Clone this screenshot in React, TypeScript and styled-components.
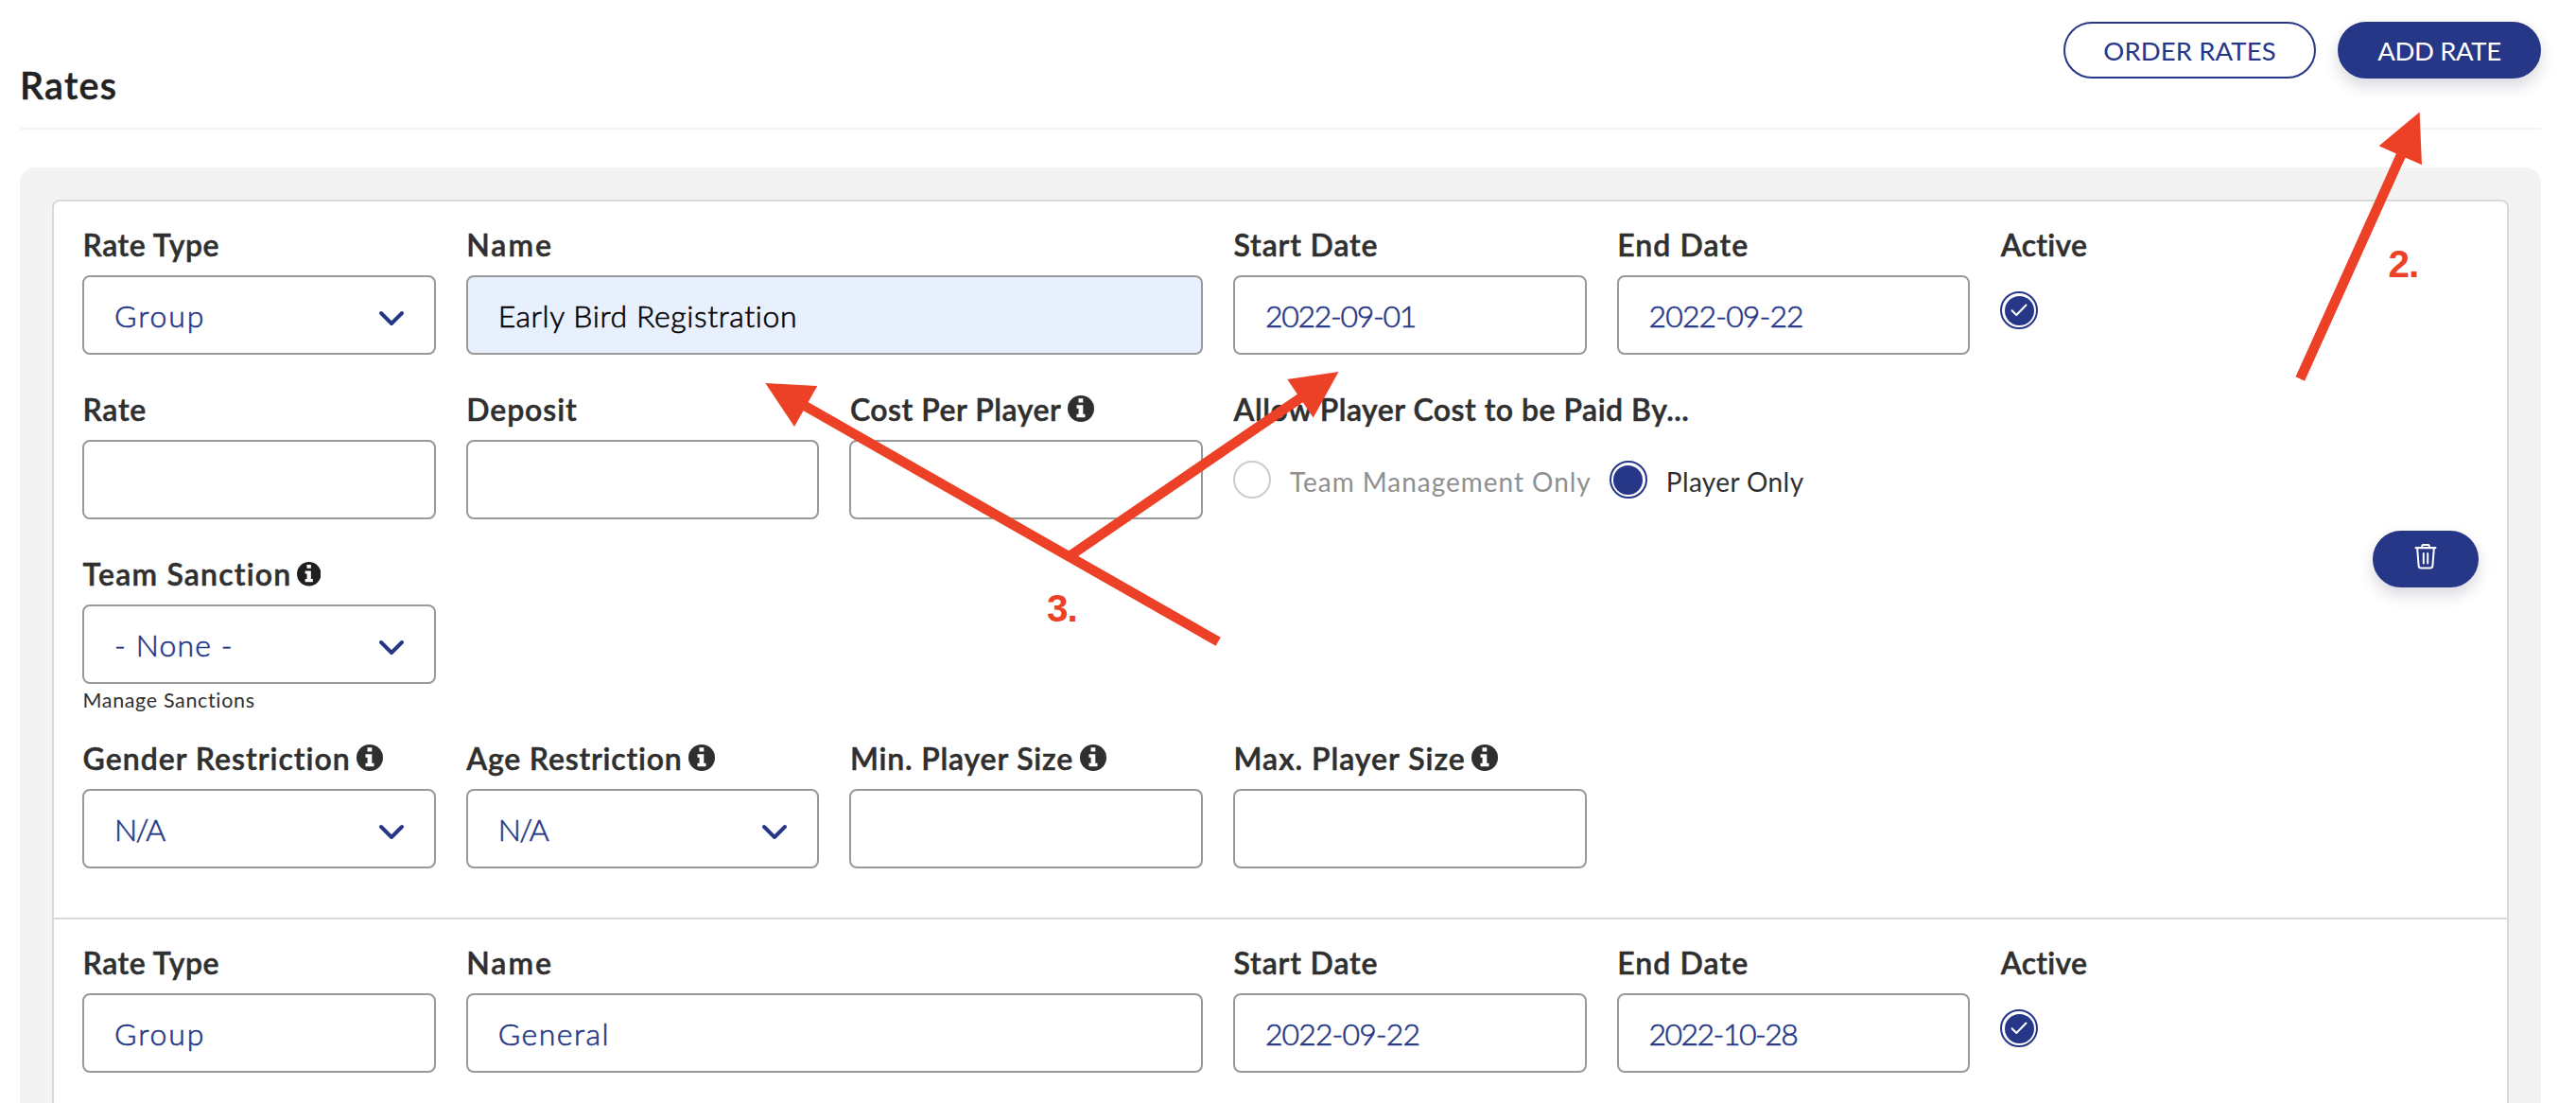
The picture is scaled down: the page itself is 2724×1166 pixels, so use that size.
import React from "react";
import styled, { createGlobalStyle } from "styled-components";

const navy = "#263787";
const ink = "#2f2f2f";
const accent = "#ec4127";

const GlobalStyle = createGlobalStyle`
  *, *::before, *::after { box-sizing: border-box; }
  body {
    margin: 0;
    background: #fff;
    color: ${ink};
    font-family: Lato, "Open Sans", sans-serif;
  }
`;

const Page = styled.main`
  position: relative;
  height: 1166px;
  overflow: hidden;
  padding: 0 37px 0 21px;
`;

const Header = styled.header`
  display: flex;
  justify-content: space-between;
  align-items: flex-end;
  height: 137px;
  border-bottom: 2px solid #f3f3f3;
`;

const Title = styled.h1`
  margin: 0 0 21px;
  font-size: 39.5px;
  line-height: 48px;
  font-weight: 600;
  letter-spacing: 1.3px;
  color: #222;
  -webkit-text-stroke: 0.5px currentColor;
`;

const Actions = styled.div`
  display: flex;
  gap: 23px;
  align-self: flex-start;
  padding-top: 23px;
`;

const Button = styled.button<{ $primary?: boolean; $width: number; $spacing?: number }>`
  display: flex;
  align-items: center;
  justify-content: center;
  width: ${(p) => p.$width}px;
  height: 60px;
  padding: 2px 0 0;
  border: 2px solid ${navy};
  border-radius: 30px;
  background: ${(p) => (p.$primary ? navy : "#fff")};
  color: ${(p) => (p.$primary ? "#fff" : navy)};
  box-shadow: ${(p) => (p.$primary ? "0 8px 16px rgba(30, 30, 70, 0.17)" : "none")};
  font: 400 27.5px/54px Lato, sans-serif;
  letter-spacing: ${(p) => p.$spacing ?? 0}px;
  white-space: nowrap;
`;

const Panel = styled.section`
  margin-top: 40px;
  padding: 34px 34px 0;
  border-radius: 16px 16px 0 0;
  background: #f3f3f3;
`;

const Card = styled.div`
  border: 2px solid #d9d9d9;
  border-radius: 8px;
  background: #fff;
`;

const RateBlock = styled.article`
  display: flex;
  justify-content: space-between;
  align-items: flex-start;
  padding: 25px 30px 52px;

  & + & {
    min-height: 400px;
    border-top: 2px solid #d9d9d9;
  }
`;

const Remove = styled.div`
  align-self: center;
  padding-top: 25px;
`;

const Rows = styled.div`
  display: flex;
  flex-direction: column;
  gap: 37px;
`;

const Row = styled.div`
  display: grid;
  grid-template-columns: repeat(6, 373.65px);
  column-gap: 32px;
`;

const Field = styled.div<{ $span?: number }>`
  display: flex;
  flex-direction: column;
  grid-column: span ${(p) => p.$span ?? 1};
`;

const Label = styled.label<{ $spacing: number }>`
  display: flex;
  align-items: center;
  height: 40px;
  margin-bottom: 13px;
  padding: 2px 0 0 0.6px;
  font-size: 32px;
  line-height: 38px;
  font-weight: 600;
  -webkit-text-stroke: 0.5px currentColor;
  letter-spacing: ${(p) => p.$spacing}px;
  white-space: nowrap;
`;

const InfoSvg = styled.svg<{ $small?: boolean }>`
  width: ${(p) => (p.$small ? 25.5 : 28)}px;
  height: ${(p) => (p.$small ? 25.5 : 28)}px;
  margin-left: ${(p) => (p.$small ? 5.5 : 6.5)}px;
  margin-top: ${(p) => (p.$small ? 0 : -2)}px;
  color: ${(p) => (p.$small ? "#1f1f1f" : ink)};
`;

const InfoIcon = ({ small }: { small?: boolean }) => (
  <InfoSvg $small={small} viewBox="0 0 28 28">
    <circle cx="14" cy="14" r="14" fill="currentColor" />
    <path d="M11.500 3.200h4.800v4.300h-4.800zM9.500 10.300h6.800v9.400h2.200v3.500H9.500v-3.500h2.100v-5.900H9.500z" fill="#fff" />
  </InfoSvg>
);

const Control = styled.div<{ $filled?: boolean; $spacing?: number }>`
  display: flex;
  align-items: center;
  justify-content: space-between;
  height: 84px;
  padding: 2px 31px 0 32px;
  border: 2px solid #999;
  border-radius: 8px;
  background: ${(p) => (p.$filled ? "#e8effd" : "#fff")};
  color: ${(p) => (p.$filled ? "#000" : navy)};
  font-size: 32px;
  line-height: 40px;
  font-weight: 300;
  -webkit-text-stroke: 0.6px currentColor;
  letter-spacing: ${(p) => p.$spacing ?? 0}px;
  white-space: nowrap;
`;

const HelpLink = styled.a`
  height: 21px;
  padding: 4px 0 0 0.5px;
  font-size: 21.5px;
  line-height: 26px;
  letter-spacing: 0.65px;
`;

const RadioGroup = styled.div`
  display: flex;
  align-items: center;
  height: 84px;
`;

const Ring = styled.span<{ $checked?: boolean }>`
  display: flex;
  flex: none;
  align-items: center;
  justify-content: center;
  width: 40px;
  height: 40px;
  border: 2px solid ${(p) => (p.$checked ? navy : "#ccc")};
  border-radius: 50%;
  background: #fff;
`;

const Dot = styled.span`
  display: flex;
  align-items: center;
  justify-content: center;
  width: 31px;
  height: 31px;
  border-radius: 50%;
  background: ${navy};
`;

const RadioText = styled.span<{ $muted?: boolean; $spacing: number }>`
  margin: 3px 19px 0 20px;
  color: ${(p) => (p.$muted ? "#8f8f8f" : ink)};
  font-size: 28px;
  line-height: 34px;
  letter-spacing: ${(p) => p.$spacing}px;
  white-space: nowrap;
`;

const CheckSlot = styled.div`
  padding-top: 17px;
  height: 84px;
`;

const Overlay = styled.svg`
  position: absolute;
  inset: 0;
  pointer-events: none;
`;

const Step = styled.text`
  fill: ${accent};
  font: 700 40.5px "Liberation Sans", Arial, sans-serif;
  letter-spacing: -1px;
`;

const Chevron = () => (
  <svg width="28" height="20" viewBox="0 0 28 20" fill="none">
    <path d="M3 5 14 16 25 5" stroke={navy} strokeWidth="4" strokeLinecap="round" strokeLinejoin="round" />
  </svg>
);

const ChevronSlot = styled.span`
  display: flex;
  margin-top: 4px;
`;

const TrashIcon = () => (
  <svg width="24" height="28" viewBox="0 0 24 28" fill="none" stroke="#fff" strokeLinecap="round">
    <path d="M1.6 5.2H22.4" strokeWidth="2.2" />
    <path d="M8.2 4.6V3q0-1 1-1h5.600q1 0 1 1v1.600" strokeWidth="1.8" />
    <path d="M3.200 6 4.600 24q.2 2.600 2.800 2.600h9.200q2.600 0 2.800-2.600L20.800 6" strokeWidth="2" />
    <path d="M9.800 11v10.500M14.200 11v10.500" strokeWidth="2" />
  </svg>
);

const TrashSlot = styled.span`
  display: flex;
  margin-bottom: 8px;
`;

const Tick = () => (
  <svg width="18" height="14" viewBox="0 0 18 14" fill="none">
    <path d="M1.500 7.300 6.300 12 16.500 1.500" stroke="#fff" strokeWidth="2" strokeLinecap="round" strokeLinejoin="round" />
  </svg>
);

type InputProps = {
  label: string;
  labelSpacing: number;
  value?: string;
  valueSpacing?: number;
  select?: boolean;
  info?: boolean;
  smallInfo?: boolean;
  filled?: boolean;
  span?: number;
  children?: React.ReactNode;
};

function InputField(p: InputProps) {
  return (
    <Field $span={p.span}>
      <Label $spacing={p.labelSpacing}>
        {p.label}
        {p.info && <InfoIcon small={p.smallInfo} />}
      </Label>
      <Control $filled={p.filled} $spacing={p.valueSpacing}>
        <span>{p.value}</span>
        {p.select && (
          <ChevronSlot>
            <Chevron />
          </ChevronSlot>
        )}
      </Control>
      {p.children}
    </Field>
  );
}

function ActiveField() {
  return (
    <Field>
      <Label $spacing={0.3}>Active</Label>
      <CheckSlot>
        <Ring $checked>
          <Dot>
            <Tick />
          </Dot>
        </Ring>
      </CheckSlot>
    </Field>
  );
}

export default function App() {
  return (
    <>
      <GlobalStyle />
      <Page>
        <Header>
          <Title>Rates</Title>
          <Actions>
            <Button $width={267} $spacing={0.1}>ORDER RATES</Button>
            <Button $width={215} $spacing={-0.4} $primary>ADD RATE</Button>
          </Actions>
        </Header>
        <Panel>
          <Card>
            <RateBlock>
              <Rows>
                <Row>
                  <InputField label="Rate Type" labelSpacing={0.55} value="Group" valueSpacing={1.9} select />
                  <InputField label="Name" labelSpacing={2} value="Early Bird Registration" valueSpacing={0.6} filled span={2} />
                  <InputField label="Start Date" labelSpacing={0.85} value="2022-09-01" valueSpacing={-1.3} />
                  <InputField label="End Date" labelSpacing={1.1} value="2022-09-22" valueSpacing={-0.9} />
                  <ActiveField />
                </Row>
                <Row>
                  <InputField label="Rate" labelSpacing={0.7} />
                  <InputField label="Deposit" labelSpacing={0.9} />
                  <InputField label="Cost Per Player" labelSpacing={0.52} info />
                  <Field $span={2}>
                    <Label $spacing={0.5}>Allow Player Cost to be Paid By...</Label>
                    <RadioGroup>
                      <Ring />
                      <RadioText $muted $spacing={0.97}>Team Management Only</RadioText>
                      <Ring $checked>
                        <Dot />
                      </Ring>
                      <RadioText $spacing={0.4}>Player Only</RadioText>
                    </RadioGroup>
                  </Field>
                </Row>
                <Row>
                  <InputField label="Team Sanction" labelSpacing={1.2} value="- None -" valueSpacing={1.1} select info smallInfo>
                    <HelpLink>Manage Sanctions</HelpLink>
                  </InputField>
                </Row>
                <Row>
                  <InputField label="Gender Restriction" labelSpacing={1} value="N/A" valueSpacing={-1.6} select info />
                  <InputField label="Age Restriction" labelSpacing={0.8} value="N/A" valueSpacing={-1.6} select info />
                  <InputField label="Min. Player Size" labelSpacing={0.83} info />
                  <InputField label="Max. Player Size" labelSpacing={1} info />
                </Row>
              </Rows>
              <Remove>
                <Button $width={112} $primary aria-label="Delete rate">
                  <TrashSlot>
                    <TrashIcon />
                  </TrashSlot>
                </Button>
              </Remove>
            </RateBlock>
            <RateBlock>
              <Row>
                <InputField label="Rate Type" labelSpacing={0.55} value="Group" valueSpacing={1.9} />
                <InputField label="Name" labelSpacing={2} value="General" valueSpacing={1.5} span={2} />
                <InputField label="Start Date" labelSpacing={0.85} value="2022-09-22" valueSpacing={-0.9} />
                <InputField label="End Date" labelSpacing={1.1} value="2022-10-28" valueSpacing={-1.55} />
                <ActiveField />
              </Row>
            </RateBlock>
          </Card>
        </Panel>
        <Overlay width="2724" height="1166" viewBox="0 0 2724 1166">
          <g stroke={accent} strokeWidth="10.5">
            <path d="M2432.300 400.500 2539 164" />
            <path d="M1288.200 678.300 851 429" />
            <path d="M1133 586.500 1377 419.500" />
          </g>
          <g fill={accent}>
            <path d="M2558.600 118.500 2515.700 154.300 2561 174.300Z" />
            <path d="M809.300 405 864.300 408 840 451Z" />
            <path d="M1415.500 393 1361.300 401 1388.700 441.500Z" />
          </g>
          <Step x="2525.500" y="293">2.</Step>
          <Step x="1107" y="656.500">3.</Step>
        </Overlay>
      </Page>
    </>
  );
}
